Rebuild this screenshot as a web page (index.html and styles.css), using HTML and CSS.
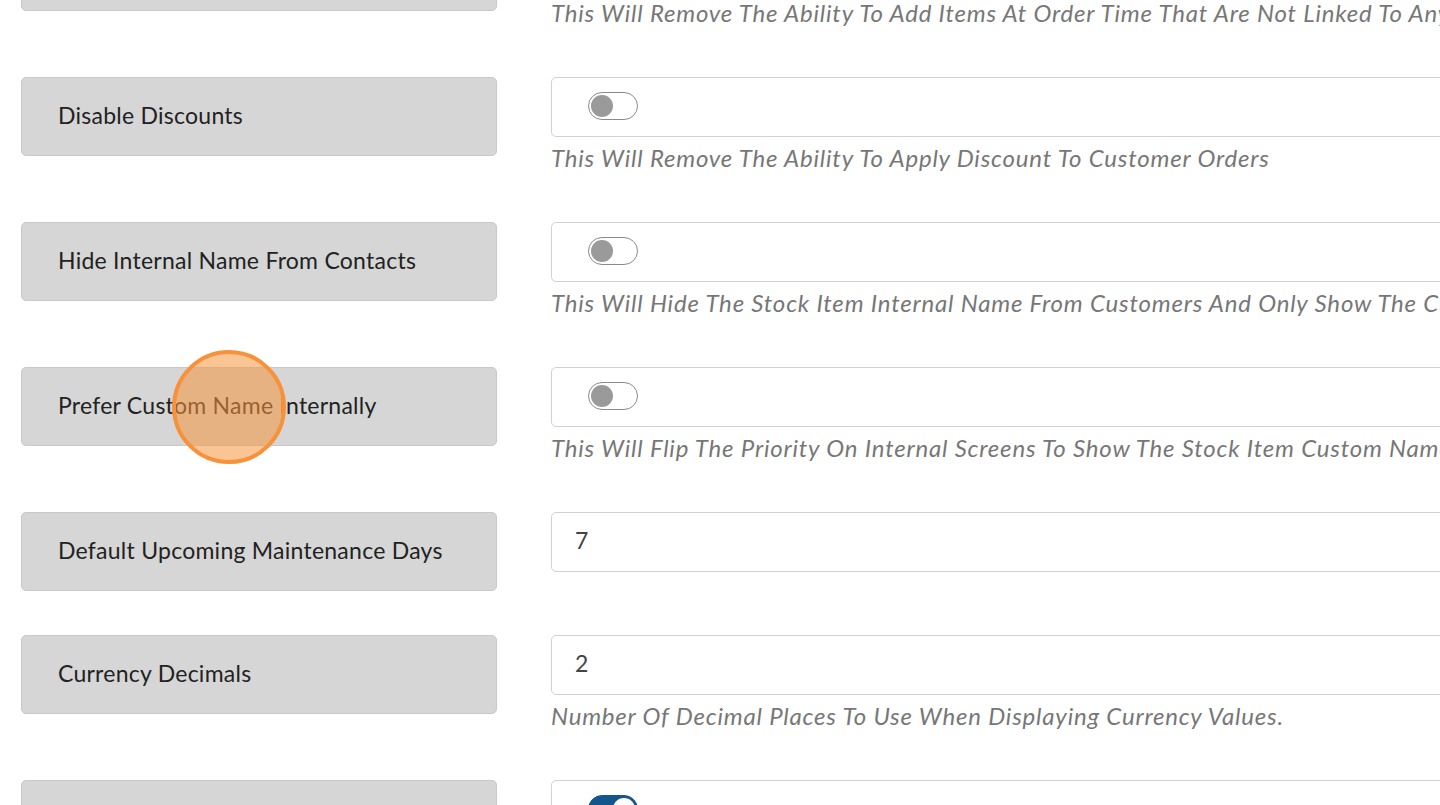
FILE: index.html
```html
<!DOCTYPE html>
<html>
<head>
<meta charset="utf-8">
<link rel="stylesheet" href="styles.css">
</head>
<body>
<div class="settings">
  <div class="row">
    <div class="label">Disable Free Text Items</div>
    <div class="field">
      <div class="control"><span class="toggle"></span></div>
      <div class="desc">This Will Remove The Ability To Add Items At Order Time That Are Not Linked To Any Stock Item</div>
    </div>
  </div>
  <div class="row">
    <div class="label">Disable Discounts</div>
    <div class="field">
      <div class="control"><span class="toggle"></span></div>
      <div class="desc">This Will Remove The Ability To Apply Discount To Customer Orders</div>
    </div>
  </div>
  <div class="row">
    <div class="label">Hide Internal Name From Contacts</div>
    <div class="field">
      <div class="control"><span class="toggle"></span></div>
      <div class="desc">This Will Hide The Stock Item Internal Name From Customers And Only Show The Custom Name</div>
    </div>
  </div>
  <div class="row">
    <div class="label">Prefer Custom Name Internally<span class="click-marker"></span></div>
    <div class="field">
      <div class="control"><span class="toggle"></span></div>
      <div class="desc">This Will Flip The Priority On Internal Screens To Show The Stock Item Custom Name First</div>
    </div>
  </div>
  <div class="row">
    <div class="label">Default Upcoming Maintenance Days</div>
    <div class="field">
      <div class="control text">7</div>
    </div>
  </div>
  <div class="row">
    <div class="label">Currency Decimals</div>
    <div class="field">
      <div class="control text">2</div>
      <div class="desc">Number Of Decimal Places To Use When Displaying Currency Values.</div>
    </div>
  </div>
  <div class="row">
    <div class="label">Show Prices Including Tax</div>
    <div class="field">
      <div class="control"><span class="toggle on"></span></div>
    </div>
  </div>
</div>
</body>
</html>
```

FILE: styles.css
```css
html, body {
  margin: 0;
  padding: 0;
  background: #ffffff;
  overflow: hidden;
  height: 805px;
  width: 1440px;
}

body {
  font-family: "Lato", "Noto Sans", sans-serif;
}

.settings {
  margin-top: -68px;
  padding-left: 21px;
  display: flex;
  flex-direction: column;
  gap: 44px;
  width: 1600px;
}

.row {
  display: flex;
  align-items: flex-start;
  gap: 54px;
}

.label {
  position: relative;
  box-sizing: border-box;
  width: 476px;
  height: 79px;
  flex: none;
  background: #d6d6d6;
  border: 1px solid #c9c9c9;
  border-radius: 5px;
  padding-left: 36px;
  padding-bottom: 3px;
  display: flex;
  align-items: center;
  font-size: 23px;
  letter-spacing: 0.25px;
  color: #222222;
}

.field {
  width: 1000px;
  flex: none;
}

.control {
  box-sizing: border-box;
  height: 60px;
  border: 1px solid #d2d2d2;
  border-radius: 5px;
  background: #fff;
  display: flex;
  align-items: center;
  padding-left: 36px;
}

.control.text {
  padding-left: 23px;
  padding-bottom: 5px;
  font-size: 23px;
  color: #444;
}

.toggle {
  position: relative;
  box-sizing: border-box;
  width: 50px;
  height: 28px;
  border: 1px solid #8a8a8a;
  border-radius: 14px;
  background: #fff;
  margin-top: -2px;
}

.toggle::after {
  content: "";
  position: absolute;
  left: 2px;
  top: 2px;
  width: 22px;
  height: 22px;
  border-radius: 50%;
  background: #9a9a9a;
}

.toggle.on {
  background: #12568c;
  border-color: #12568c;
}

.toggle.on::after {
  left: auto;
  right: 2px;
  background: #fff;
}

.desc {
  padding-top: 4px;
  padding-bottom: 3px;
  line-height: 34px;
  font-size: 24px;
  letter-spacing: 0.8px;
  font-style: italic;
  color: #777777;
  white-space: nowrap;
}

.click-marker {
  position: absolute;
  left: 150px;
  top: -18px;
  width: 106px;
  height: 106px;
  border-radius: 50%;
  border: 4px solid #f7923a;
  background: rgba(245, 150, 60, 0.55);
}
```
